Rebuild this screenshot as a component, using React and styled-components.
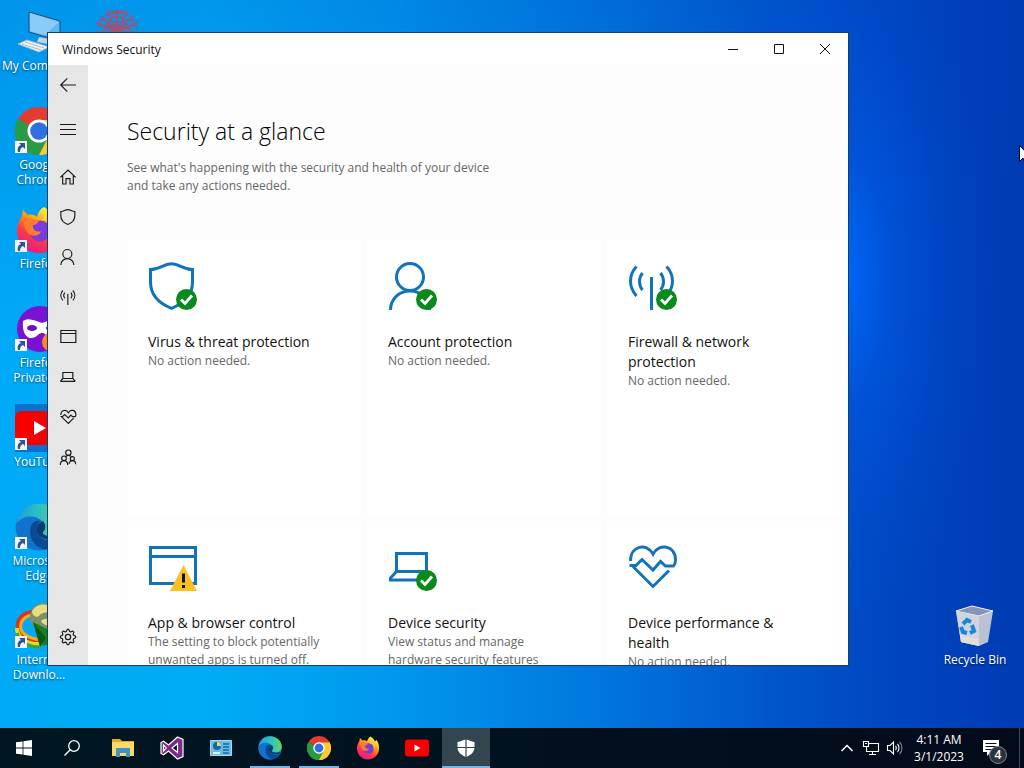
import React from "react";
import styled, { createGlobalStyle } from "styled-components";

const blue = "#1273bd";

const Lines = ({ children, size = 16, color = "#1a1a1a", weight = 3.5 }) => (
  <Drawing width={size} height={size} viewBox="0 0 48 48" fill="none" stroke={color} strokeWidth={weight}>
    {children}
  </Drawing>
);

const shapes = {
  shield: (
    <path d="M2.5 7.5C12 7.5 15 1.8 23.5 1.8S35 7.5 44.5 7.5V20C44.5 32 37 41 23.5 46.3C10 41 2.5 32 2.5 20Z" />
  ),
  person: (
    <>
      <circle cx="22" cy="15" r="13.5" />
      <path d="M2.5 48C2.5 37 11 29 22 29S41.5 37 41.5 48" />
    </>
  ),
  antenna: (
    <path d="M23.5 15V48M8.5 4.5C0.5 13 0.5 25 8.5 34M14.5 11C10.5 16 10.5 23 14.5 28M38.5 4.5C46.5 13 46.5 25 38.5 34M32.5 11C36.5 16 36.5 23 32.5 28" />
  ),
  browser: <path d="M2.5 4.5H47.5V40.5H2.5ZM2.5 13.5H47.5" />,
  laptop: <path d="M8.5 29V10.5H38.5V29M8.5 28.5L2.5 35V37H44.5V35L38.5 28.5Z" />,
  heart: (
    <path d="M2.5 18C2.5 2 19 0 25 11C31 0 47.5 2 47.5 17C47.5 20 46.5 22 45.5 23H37.5L32.5 18.5L25 27L14 16.5L8 22.5H1.5M5 23.5L25 43.5L41 27.5" />
  ),
  back: <path d="M48 24H2M22 4L2 24L22 44" />,
  menu: <path d="M0 10.5H48M0 25.5H48M0 40.5H48" />,
  home: <path d="M1 25L24 3L47 25M8 19V45H18V29H30V45H40V19" />,
  family: (
    <>
      <circle cx="25" cy="11" r="8" />
      <circle cx="12" cy="28" r="7" />
      <circle cx="37" cy="29" r="6" />
      <path d="M17 23C19 20 22 19 25 19S32 20 34 23M1 48C1 40 6 35 12 35S23 40 23 48M27 45C28 39 32 35 37 35S47 39 47 46" />
    </>
  ),
};

// eight teeth, two outer and two inner points for each
const gearPoints = Array.from({ length: 32 }, (_, i) => {
  const radius = i % 4 < 2 ? 23 : 17.5;
  const angle = ((i - 0.5) * Math.PI) / 16;
  return `${24 + radius * Math.sin(angle)},${24 - radius * Math.cos(angle)}`;
}).join(" ");

shapes.gear = (
  <>
    <polygon points={gearPoints} strokeLinejoin="round" />
    <circle cx="24" cy="24" r="8" />
  </>
);

const CheckBadge = () => (
  <g stroke="none">
    <circle cx="38.5" cy="37.5" r="10.5" fill="#0a8a1b" />
    <path d="M33 37.5L37 41.5L44 33.5" fill="none" stroke="#fff" strokeWidth="2.8" />
  </g>
);

const WarningBadge = () => (
  <g stroke="none">
    <path d="M35.5 22L49 48H22Z" fill="#fbc021" />
    <path d="M34 30.5H37V39.5H34ZM34 42H37V45H34Z" fill="#111" />
  </g>
);

const Chrome = ({ size = 48 }) => (
  <Drawing width={size} height={size} viewBox="0 0 48 48">
    <path d="M24 24L3.2 12A24 24 0 0 1 44.8 12Z" fill="#e33b2e" />
    <path d="M24 24L44.8 12A24 24 0 0 1 24 48Z" fill="#fcc934" />
    <path d="M24 24L24 48A24 24 0 0 1 3.2 12Z" fill="#2a9a45" />
    <path d="M24 13H45.3A24 24 0 0 1 24 48L33.5 29.5Z" fill="#fcc934" />
    <path d="M3.2 12L14.5 29.5L24 35L33.5 29.5L24 48A24 24 0 0 1 3.2 12Z" fill="#2a9a45" />
    <circle cx="24" cy="24" r="11.5" fill="#fff" />
    <circle cx="24" cy="24" r="8.8" fill="#2f6fe0" />
  </Drawing>
);

const Firefox = ({ size = 48 }) => (
  <Drawing width={size} height={size} viewBox="0 0 48 48">
    <defs>
      <linearGradient id={`fox${size}`} x1="0.8" y1="0" x2="0.25" y2="1">
        <stop offset="0.1" stopColor="#fff044" />
        <stop offset="0.4" stopColor="#ff980e" />
        <stop offset="0.65" stopColor="#ff3b47" />
        <stop offset="1" stopColor="#e5178c" />
      </linearGradient>
    </defs>
    <path
      d="M29 1C34 4 36 7 38 11C40 10 40 8 40 7C45 13 47 19 46 27C45 39 35 47 24 47C11 47 2 37 2 25C2 19 4 14 7 10C7 8 7 6 8 4L13 9C17 8 20 9 22 11C23 7 25 3 29 1Z"
      fill={`url(#fox${size})`}
    />
    <circle cx="25" cy="25" r="10.5" fill="#7a3bd9" />
    <path d="M9 12C15 12 18 14 23 14C25 16 21 19 18 19C17 23 21 27 26 25C25 30 18 31 14 28C10 25 8 18 9 12Z" fill="#ff7a2c" />
    <path d="M27 14C34 14 37 20 35 27C40 21 38 13 29 10Z" fill="#ffd23c" />
  </Drawing>
);

const FirefoxPrivate = () => (
  <Drawing width="48" height="48" viewBox="0 0 48 48">
    <circle cx="25" cy="24" r="23" fill="#7a12d4" />
    <path
      d="M8 16C14 12 20 16 27 18C34 16 40 12 46 16C47 26 44 33 38 33C32 33 31 28 27 28S22 33 16 33C10 33 7 25 8 16Z"
      fill="#fff"
    />
    <ellipse cx="17" cy="23" rx="5" ry="3" fill="#6b11c0" />
    <ellipse cx="36" cy="23" rx="5" ry="3" fill="#6b11c0" />
    <circle cx="37" cy="37" r="10" fill="#ff8a1c" />
    <circle cx="38" cy="37" r="4" fill="#7a3bd9" />
  </Drawing>
);

const YouTube = ({ size = 48, tile }) => (
  <Drawing width={size} height={size} viewBox="0 0 48 48">
    {tile && <path d="M0 0H48V48H0Z" fill="#0b6fd0" />}
    <rect y="7" width="48" height="34" rx="6" fill="#f90000" />
    <path d="M19 17L31 24L19 31Z" fill="#fff" />
  </Drawing>
);

const Edge = ({ size = 48 }) => (
  <Drawing width={size} height={size} viewBox="0 0 48 48">
    <defs>
      <linearGradient id={`wave${size}`} x1="0" y1="0.3" x2="1" y2="0.3">
        <stop offset="0" stopColor="#1c9de0" />
        <stop offset="0.55" stopColor="#2fc3c3" />
        <stop offset="1" stopColor="#62d65a" />
      </linearGradient>
    </defs>
    <circle cx="24" cy="24" r="23.5" fill="#1273cf" />
    <path
      d="M1 21C3 8 12 0.5 24 0.5C38 0.5 47.5 11 47.5 21C47.5 29 41 33 35 33C30 33 27 31 28 29C31 26 31 22 28 19C21 11 7 12 1 21Z"
      fill={`url(#wave${size})`}
    />
    <path d="M17 21C12 30 17 45 31 46.5C37 45 42 42 45 36C37 40 25 38 22 29C21 25 22 22 25 18C22 17 19 18 17 21Z" fill="#0b4a93" />
    <path d="M28 18C20 21 20 30 26 34C33 38 41 37 45 34C47 31 41 33 35 33C30 33 27 31 28 29C31 26 31 22 28 18Z" fill="#04213f" opacity="0.65" />
  </Drawing>
);

const DownloadManager = () => (
  <Drawing width="48" height="48" viewBox="0 0 48 48" fill="none">
    <path d="M19 10C8 10 1 18 3 27S14 40 27 41" stroke="#d8371d" strokeWidth="4" />
    <path d="M19 13C10 13 4 20 6 27S16 37 28 38" stroke="#ffa81d" strokeWidth="3" />
    <path d="M2 26C2 36 12 43 26 42" stroke="#d9e021" strokeWidth="4" />
    <path d="M2 31C5 41 14 45 26 45" stroke="#3fa62b" strokeWidth="3" />
    <circle cx="29" cy="15" r="14" fill="#7f8f68" />
    <path d="M17 9C22 1 32 1 37 6C35 12 27 9 24 14C22 16 17 14 17 9ZM26 19C30 15 38 17 40 21C37 25 28 24 26 19Z" fill="#e9dc7c" />
    <path d="M18 20L36 29L48 24V38L27 44L29 37Z" fill="#14811f" />
    <path d="M18 20L25 45L31 36Z" fill="#0b5a14" />
  </Drawing>
);

const Computer = () => (
  <Drawing width="48" height="48" viewBox="0 0 48 48">
    <path d="M14 4L45 13V33L14 24Z" fill="#5fb8f5" stroke="#1f4d78" />
    <path d="M15 5L44 14L30 27L15 23Z" fill="#8accf8" />
    <path d="M24 29L34 31L38 37L22 34Z" fill="#c3d3de" />
    <path d="M3 36L12 32L34 39L24 44Z" fill="#eef3f6" stroke="#a9bccb" />
    <path d="M7 36L26 42M10 34L29 40" stroke="#a9bccb" />
  </Drawing>
);

const RedWeb = () => (
  <Drawing width="48" height="48" viewBox="0 0 48 48" fill="none" stroke="#a4506f" strokeWidth="1.6">
    <path d="M24 2V46M2 24H46M8 8L40 40M40 8L8 40M14 3L34 45M34 3L14 45M3 14L45 34M45 14L3 34" />
    <path d="M16 3H32M12 8L20 5H28L36 8M6 12H16L20 9H28L32 12H42M4 18H12L18 14H30L36 18H44M10 22L18 18H30L38 22" />
    <circle cx="24" cy="24" r="7" />
  </Drawing>
);

const RecycleBin = () => (
  <Drawing width="48" height="48" viewBox="0 0 48 48">
    <path d="M5 9L21 4L42 9L37 40L28 44L10 40Z" fill="#b9c1d2" />
    <path d="M5 9L21 4L42 9L28 14Z" fill="#8595b5" stroke="#eef1f6" />
    <path d="M5 9L28 14V44L10 40Z" fill="#cfd4df" />
    <path d="M9 33L28 37V44L10 40Z" fill="#e3ddda" />
    <path
      d="M12 22L16 18L20 20M10 25L12 30L16 31M19 31L23 29L21 23"
      fill="none"
      stroke="#1787d8"
      strokeWidth="4"
    />
  </Drawing>
);

const Start = () => (
  <Drawing width="16" height="16" viewBox="0 0 16 16" fill="#fff">
    <path d="M0 2.3L6.6 1.4V7.6H0ZM7.4 1.3L16 0V7.6H7.4ZM0 8.4H6.6V14.6L0 13.7ZM7.4 8.4H16V16L7.4 14.8Z" />
  </Drawing>
);

const Search = () => (
  <Drawing width="16" height="16" viewBox="0 0 16 16" fill="none" stroke="#fff" strokeWidth="1.3">
    <circle cx="10" cy="6" r="5.3" />
    <path d="M6.2 9.8L0.5 15.5" />
  </Drawing>
);

const Explorer = () => (
  <Drawing width="24" height="24" viewBox="0 0 24 24">
    <path d="M1 3H9L11 5H23V20H1Z" fill="#e9a91f" />
    <path d="M1 6H23V20H1Z" fill="#fcd869" />
    <path d="M5 12H19V21H15V17H9V21H5Z" fill="#3c94c8" />
  </Drawing>
);

const VisualStudio = () => (
  <Drawing width="24" height="24" viewBox="0 0 24 24">
    <path
      d="M17.5 1L23 3.5V20.5L17.5 23L8.5 15L3.5 18.8L1 17.5V6.5L3.5 5.2L8.5 9ZM17.5 7.5L12 12L17.5 16.5ZM3.5 9V15L6.3 12Z"
      fill="#7a2a8c"
      stroke="#fff"
      strokeWidth="1.2"
      fillRule="evenodd"
    />
  </Drawing>
);

const ControlPanel = () => (
  <Drawing width="24" height="24" viewBox="0 0 24 24">
    <path d="M1.5 4.5H22.5V19.5H1.5Z" fill="#65bdea" stroke="#9bdcf7" />
    <circle cx="8" cy="10" r="4" fill="#1766a8" />
    <path d="M8 10V6A4 4 0 0 1 12 10Z" fill="#f5d25b" />
    <path d="M14 8H20M14 11H20M14 14H20M14 17H20" stroke="#1766a8" strokeWidth="1.4" />
    <path d="M4 17H11" stroke="#e6f7ff" strokeWidth="2" />
  </Drawing>
);

const Defender = () => (
  <Drawing width="18" height="18" viewBox="0 0 18 18">
    <path d="M0.5 3C4 3 6 0.5 9 0.5S14 3 17.5 3V8C17.5 13 14 16 9 18C4 16 0.5 13 0.5 8Z" fill="#fff" />
    <path d="M9 0V18M0 8.5H18" stroke="#334650" strokeWidth="1.2" />
  </Drawing>
);

const desktopItems = [
  { label: "My Computer", icon: <Computer />, oneLine: true },
  { label: "Google Chrome", icon: <Chrome />, shortcut: true },
  { label: "Firefox", icon: <Firefox />, shortcut: true },
  { label: "Firefox Private ...", icon: <FirefoxPrivate />, shortcut: true },
  { label: "YouTube", icon: <YouTube tile />, shortcut: true },
  { label: "Microsoft Edge", icon: <Edge />, shortcut: true },
  { label: "Internet Downlo...", icon: <DownloadManager />, shortcut: true },
  { label: "", icon: <RedWeb /> },
];

const navItems = [
  ["Home", "home"],
  ["Virus & threat protection", "shield"],
  ["Account protection", "person"],
  ["Firewall & network protection", "antenna"],
  ["App & browser control", "browser"],
  ["Device security", "laptop"],
  ["Device performance & health", "heart"],
  ["Family options", "family"],
];

const cards = [
  { title: "Virus & threat protection", text: "No action needed.", shape: "shield", badge: <CheckBadge /> },
  { title: "Account protection", text: "No action needed.", shape: "person", badge: <CheckBadge /> },
  { title: "Firewall & network protection", text: "No action needed.", shape: "antenna", badge: <CheckBadge /> },
  {
    title: "App & browser control",
    text: "The setting to block potentially unwanted apps is turned off.",
    shape: "browser",
    badge: <WarningBadge />,
  },
  {
    title: "Device security",
    text: "View status and manage hardware security features",
    shape: "laptop",
    badge: <CheckBadge />,
  },
  { title: "Device performance & health", text: "No action needed.", shape: "heart" },
];

const apps = [
  { name: "File Explorer", icon: <Explorer /> },
  { name: "Visual Studio", icon: <VisualStudio /> },
  { name: "Control Panel", icon: <ControlPanel /> },
  { name: "Microsoft Edge", icon: <Edge size={24} />, open: true },
  { name: "Google Chrome", icon: <Chrome size={24} />, open: true },
  { name: "Firefox", icon: <Firefox size={24} /> },
  { name: "YouTube", icon: <YouTube size={24} /> },
  { name: "Windows Security", icon: <Defender />, active: true },
];

const DesktopIcon = ({ label, icon, shortcut, row, oneLine }) => (
  <IconCell row={row}>
    <IconArt>
      {icon}
      {shortcut && (
        <ShortcutArrow width="12" height="12" viewBox="0 0 12 12">
          <path d="M0 0H12V12H0Z" fill="#f4f6fa" />
          <path d="M4 2H10V8L8 6C6 7 5 8 5 11H3C2 8 3 5 6 4Z" fill="#2b5596" />
        </ShortcutArrow>
      )}
    </IconArt>
    <IconLabel oneLine={oneLine}>{label}</IconLabel>
  </IconCell>
);

const CaptionGlyph = ({ d }) => (
  <Drawing width="10" height="10" viewBox="0 0 10 10" fill="none" stroke="#111">
    <path d={d} />
  </Drawing>
);

const App = () => (
  <>
    <GlobalStyle />
    <Screen>
      <Desktop>
        <IconGrid>
          {desktopItems.map((item, i) => (
            <DesktopIcon key={i} {...item} />
          ))}
        </IconGrid>
        <IconGrid>
          <DesktopIcon label="Recycle Bin" icon={<RecycleBin />} row={7} />
        </IconGrid>

        <Window>
          <TitleBar>
            <WindowTitle>Windows Security</WindowTitle>
            <CaptionButton aria-label="Minimize">
              <CaptionGlyph d="M0 5.5H10" />
            </CaptionButton>
            <CaptionButton aria-label="Maximize">
              <CaptionGlyph d="M0.5 0.5H9.5V9.5H0.5Z" />
            </CaptionButton>
            <CaptionButton aria-label="Close">
              <CaptionGlyph d="M0 0L10 10M10 0L0 10" />
            </CaptionButton>
          </TitleBar>
          <WindowBody>
            <Sidebar>
              <NavButton aria-label="Back" gap="4px">
                <Lines>{shapes.back}</Lines>
              </NavButton>
              <NavButton aria-label="Menu" gap="8px">
                <Lines>{shapes.menu}</Lines>
              </NavButton>
              {navItems.map(([name, shape]) => (
                <NavButton key={name} aria-label={name}>
                  <Lines>{shapes[shape]}</Lines>
                </NavButton>
              ))}
              <NavButton aria-label="Settings" last>
                <Lines>{shapes.gear}</Lines>
              </NavButton>
            </Sidebar>
            <Content>
              <Heading>Security at a glance</Heading>
              <Intro>See what's happening with the security and health of your device and take any actions needed.</Intro>
              <CardGrid>
                {cards.map(({ title, text, shape, badge }) => (
                  <Card key={title} href="#">
                    <Lines size={48} color={blue} weight={3}>
                      {shapes[shape]}
                      {badge}
                    </Lines>
                    <CardTitle>{title}</CardTitle>
                    <CardText>{text}</CardText>
                  </Card>
                ))}
              </CardGrid>
            </Content>
          </WindowBody>
        </Window>

        <Cursor width="12" height="19" viewBox="0 0 12 19">
          <path d="M0.5 0.5V16.5L4 13L6.5 18.5L9 17.5L6.5 12H11.5Z" fill="#fff" stroke="#000" />
        </Cursor>
      </Desktop>

      <Taskbar>
        <TaskButton aria-label="Start">
          <Start />
        </TaskButton>
        <TaskButton aria-label="Search">
          <Search />
        </TaskButton>
        <AppList>
          {apps.map(({ name, icon, open, active }) => (
            <TaskButton key={name} aria-label={name} open={open} active={active}>
              {icon}
            </TaskButton>
          ))}
        </AppList>
        <Tray>
          <TrayButton aria-label="Show hidden icons">
            <Drawing width="12" height="8" viewBox="0 0 12 8" fill="none" stroke="#fff" strokeWidth="1.5">
              <path d="M0.5 7L6 1.5L11.5 7" />
            </Drawing>
          </TrayButton>
          <TrayButton aria-label="Network">
            <Drawing width="16" height="16" viewBox="0 0 16 16" fill="none" stroke="#fff" strokeWidth="1.1">
              <path d="M6 3.5H15.5V11.5H3.5V7M0.5 1.5H5.5V6.5H0.5ZM2 3.5H4M9.5 11.5V14.5M6 14.5H13" />
            </Drawing>
          </TrayButton>
          <TrayButton aria-label="Volume">
            <Drawing width="16" height="16" viewBox="0 0 16 16" fill="none" stroke="#fff" strokeWidth="1.1">
              <path d="M0.5 5.5H3L6.5 2V14L3 10.5H0.5ZM8.5 6C9.5 7 9.5 9 8.5 10M10.5 4C12.5 6 12.5 10 10.5 12" />
              <path d="M12.5 2C15.8 5 15.8 11 12.5 14" opacity="0.5" />
            </Drawing>
          </TrayButton>
          <Clock>
            <span>4:11 AM</span>
            <span>3/1/2023</span>
          </Clock>
          <NotificationButton aria-label="Notifications">
            <Drawing width="16" height="16" viewBox="0 0 16 16">
              <path d="M0 0H16V12H8L4 16V12H0Z" fill="#fff" />
              <path d="M2.5 3.5H13.5M2.5 6.5H13.5M2.5 9.5H9" stroke="#06101c" strokeWidth="1.2" />
            </Drawing>
            <Count>4</Count>
          </NotificationButton>
        </Tray>
      </Taskbar>
    </Screen>
  </>
);

export default App;

const GlobalStyle = createGlobalStyle`
  * {
    box-sizing: border-box;
  }

  body {
    margin: 0;
    font-family: "Open Sans", "Noto Sans", sans-serif;
    font-size: 12px;
  }

  button {
    padding: 0;
    border: 0;
    background: none;
    font: inherit;
    color: inherit;
  }
`;

const Drawing = styled.svg`
  display: block;
  flex: none;
  overflow: visible;
`;

const Screen = styled.div`
  display: flex;
  flex-direction: column;
  height: 100vh;
  overflow: hidden;
`;

const Desktop = styled.main`
  position: relative;
  flex: 1;
  min-height: 0;
  display: flex;
  justify-content: space-between;
  padding-right: 10px;
  overflow: hidden;
  background: radial-gradient(
      ellipse 15% 50% at 82% 38%,
      rgba(0, 106, 255, 0.9),
      rgba(0, 96, 245, 0.4) 35%,
      rgba(0, 90, 240, 0.12) 70%,
      rgba(0, 90, 240, 0) 100%
    ),
    linear-gradient(172deg, rgba(0, 60, 190, 0.2), rgba(0, 60, 190, 0) 40%),
    linear-gradient(90deg, #00aaf6 0%, #00acf5 20%, #0098ee 38%, #0078dd 58%, #0055cb 76%, #0045bf 88%, #003bb3 100%);
`;

const IconGrid = styled.div`
  display: grid;
  grid-template-rows: repeat(auto-fill, 99px);
  grid-auto-columns: 78px;
  grid-auto-flow: column;
`;

const IconCell = styled.button.withConfig({ shouldForwardProp: (prop) => prop !== "row" })`
  grid-row: ${(p) => p.row};
  display: flex;
  flex-direction: column;
  align-items: center;
  padding-top: 8px;
`;

const IconArt = styled.span`
  position: relative;
`;

const ShortcutArrow = styled(Drawing)`
  position: absolute;
  left: 0;
  bottom: 2px;
`;

const IconLabel = styled.span.withConfig({ shouldForwardProp: (prop) => prop !== "oneLine" })`
  max-width: 74px;
  padding-top: 2px;
  font-size: 12px;
  line-height: 15px;
  color: #fff;
  white-space: ${(p) => (p.oneLine ? "nowrap" : "normal")};
  text-shadow: 0 1px 2px rgba(0, 0, 0, 0.6);
`;

const Window = styled.section`
  position: absolute;
  inset: 32px 175px 62px 47px;
  display: flex;
  flex-direction: column;
  border: 1px solid #10406e;
  background: #fff;
`;

const TitleBar = styled.header`
  display: flex;
  flex: none;
  height: 32px;
`;

const WindowTitle = styled.span`
  flex: 1;
  padding-left: 14px;
  line-height: 34px;
  color: #111;
`;

const CaptionButton = styled.button`
  display: grid;
  place-items: center;
  width: 46px;
`;

const WindowBody = styled.div`
  display: flex;
  flex: 1;
  min-height: 0;
`;

const Sidebar = styled.nav`
  display: flex;
  flex-direction: column;
  flex: none;
  width: 40px;
  padding-bottom: 8px;
  background: #e6e6e6;
`;

const NavButton = styled.button.withConfig({ shouldForwardProp: (prop) => !["gap", "last"].includes(prop) })`
  display: grid;
  place-items: center;
  height: 40px;
  margin-top: ${(p) => (p.last ? "auto" : 0)};
  margin-bottom: ${(p) => p.gap || 0};
`;

const Content = styled.div`
  flex: 1;
  min-width: 0;
  padding: 50px 0 0 39px;
  overflow: hidden;
  background: #fdfdfd;
`;

const Heading = styled.h1`
  margin: 0;
  font-size: 23px;
  line-height: 32px;
  font-weight: 300;
  color: #000;
`;

const Intro = styled.p`
  max-width: 380px;
  margin: 12px 0 45px;
  font-size: 12px;
  line-height: 18px;
  color: #666;
`;

const CardGrid = styled.div`
  display: grid;
  grid-template-columns: repeat(auto-fill, 234px);
  grid-auto-rows: 275px;
  gap: 6px;
`;

const Card = styled.a`
  display: flex;
  flex-direction: column;
  padding: 22px 30px 22px 21px;
  background: #fff;
  color: inherit;
  text-decoration: none;
`;

const CardTitle = styled.span`
  margin-top: 22px;
  font-size: 14px;
  line-height: 20px;
  color: #111;
`;

const CardText = styled.span`
  font-size: 12px;
  line-height: 18px;
  color: #666;
`;

const Cursor = styled(Drawing)`
  position: absolute;
  top: 145px;
  left: calc(100% - 5px);
`;

const Taskbar = styled.footer`
  display: flex;
  flex: none;
  height: 40px;
  background: linear-gradient(90deg, #001721, #02111f 50%, #030b1b);
  color: #fff;
`;

const AppList = styled.div`
  display: flex;
  gap: 1px;
  margin-left: 3px;
`;

const TaskButton = styled.button.withConfig({ shouldForwardProp: (prop) => !["open", "active"].includes(prop) })`
  display: grid;
  place-items: center;
  width: 48px;
  background-color: ${(p) => (p.active ? "#334650" : "transparent")};
  background-image: ${(p) => (p.open || p.active ? "linear-gradient(#76b3e6, #76b3e6)" : "none")};
  background-size: ${(p) => (p.active ? "100%" : "40px")} 2px;
  background-position: bottom center;
  background-repeat: no-repeat;
`;

const Tray = styled.div`
  display: flex;
  margin-left: auto;
  margin-right: 4px;
  border-right: 1px solid #3f4a57;
`;

const TrayButton = styled.button`
  display: grid;
  place-items: center;
  width: 24px;
`;

const Clock = styled.button`
  display: flex;
  flex-direction: column;
  align-items: center;
  justify-content: center;
  width: 64px;
  font-size: 12px;
  line-height: 17px;
`;

const NotificationButton = styled.button`
  position: relative;
  display: grid;
  place-items: center;
  width: 48px;
  padding-right: 8px;
`;

const Count = styled.span`
  position: absolute;
  left: 18px;
  top: 18px;
  width: 18px;
  height: 18px;
  border: 1px solid #7d848c;
  border-radius: 50%;
  background: #2a3440;
  font-size: 12px;
  font-weight: 600;
  line-height: 16px;
  text-align: center;
`;
